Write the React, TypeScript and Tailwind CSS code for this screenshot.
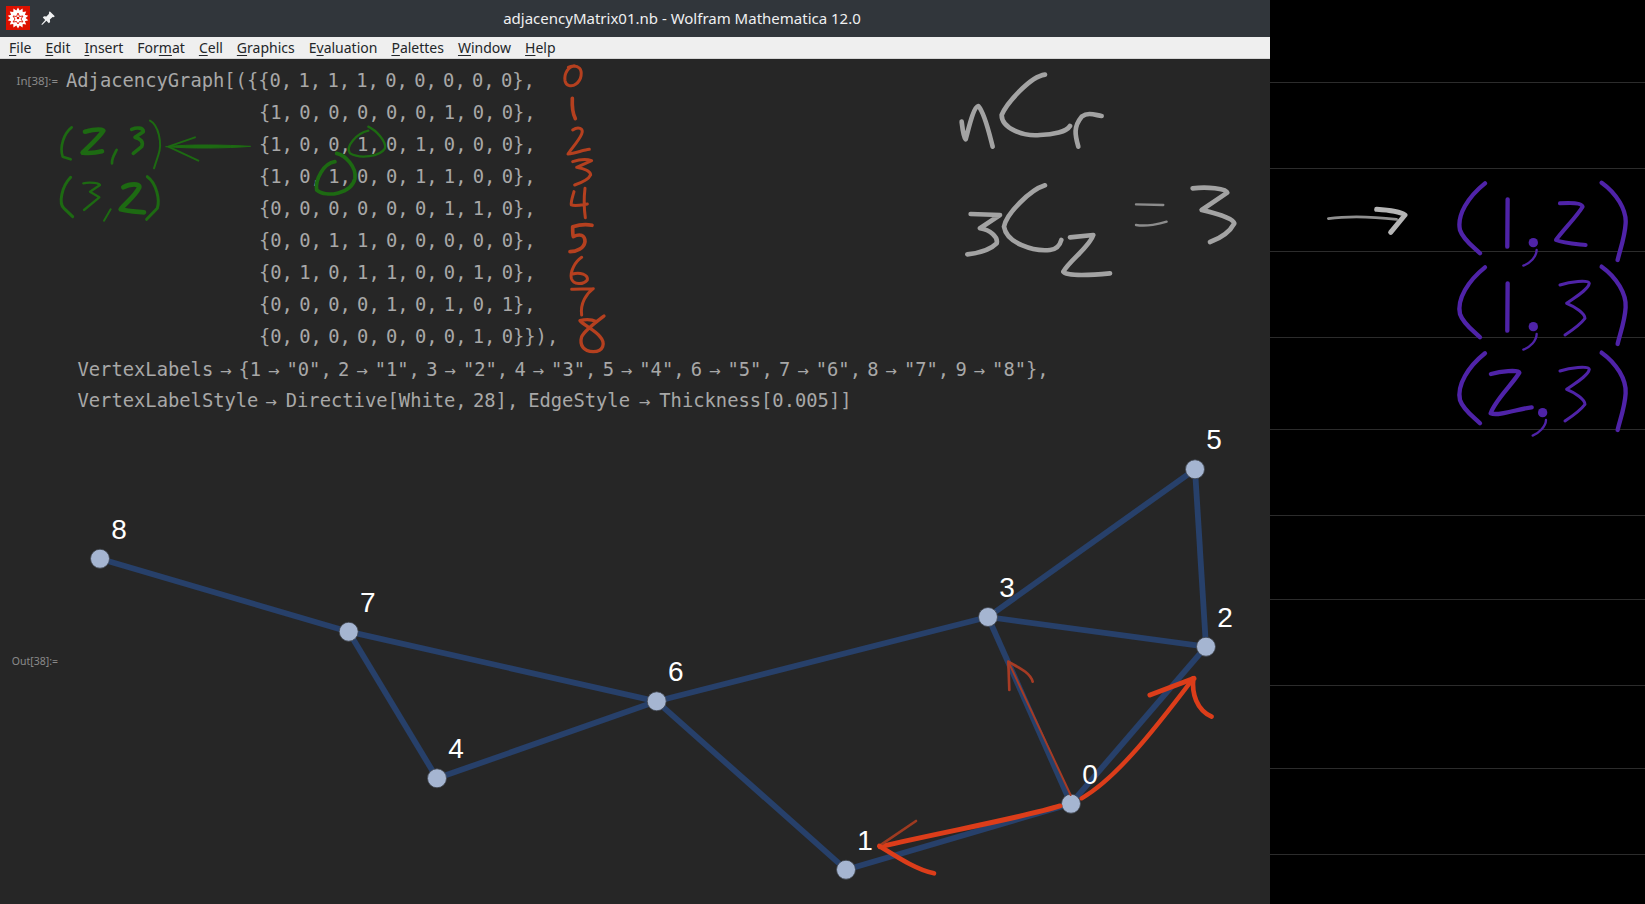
const MENU: [string, string, string][] = [
  ["", "F", "ile"],
  ["", "E", "dit"],
  ["", "I", "nsert"],
  ["For", "m", "at"],
  ["", "C", "ell"],
  ["", "G", "raphics"],
  ["E", "v", "aluation"],
  ["", "P", "alettes"],
  ["", "W", "indow"],
  ["", "H", "elp"],
];

const MATRIX = [
  "{1, 0, 0, 0, 0, 0, 1, 0, 0},",
  "{1, 0, 0, 1, 0, 1, 0, 0, 0},",
  "{1, 0, 1, 0, 0, 1, 1, 0, 0},",
  "{0, 0, 0, 0, 0, 0, 1, 1, 0},",
  "{0, 0, 1, 1, 0, 0, 0, 0, 0},",
  "{0, 1, 0, 1, 1, 0, 0, 1, 0},",
  "{0, 0, 0, 0, 1, 0, 1, 0, 1},",
  "{0, 0, 0, 0, 0, 0, 0, 1, 0}}),",
];

const NODES: Record<string, [number, number]> = {
  "0": [1071, 803.7],
  "1": [846, 869.7],
  "2": [1206, 646.7],
  "3": [988, 617],
  "4": [437, 778.3],
  "5": [1195, 469.3],
  "6": [656.7, 701.3],
  "7": [348.7, 631.7],
  "8": [100, 558.7],
};

const EDGES = ["01", "02", "03", "16", "23", "25", "35", "36", "46", "47", "67", "78"];

const RULES = [83, 86, 83, 86, 92, 86, 84, 86, 83, 86];

const LABELS = ["1", "2", "3", "4", "5", "6", "7", "8", "9"];

function Arrow() {
  return <span className="mx-[6.800px] font-['DejaVu_Sans',sans-serif] text-[14px]">→</span>;
}

function spikey() {
  const pts: string[] = [];
  for (let i = 0; i < 28; i++) {
    const r = i % 2 === 0 ? 10.5 : 7.6;
    const a = (i * Math.PI) / 14 - Math.PI / 2;
    pts.push(`${(12 + r * Math.cos(a)).toFixed(2)},${(12 + r * Math.sin(a)).toFixed(2)}`);
  }
  return pts.join(" ");
}

function Logo() {
  return (
    <svg width="24" height="24" viewBox="0 0 24 24" className="bg-[#dd1100]">
      <polygon points={spikey()} fill="#ffffff" />
      <path d="M12 7l1.5 3.5 3.5-.5-2 3 2 3-3.5-.5-1.500 2.500-1.500-2.500-3.500.5 2-3-2-3 3.500.5z" fill="none" stroke="#dd1100" strokeWidth="0.9" />
      <circle cx="12" cy="12" r="1.300" fill="#dd1100" />
    </svg>
  );
}

function PinIcon() {
  return (
    <svg width="16" height="16" viewBox="0 0 16 16" fill="#eff0f1">
      <path d="M9.700 1.200l5.100 5.100-1.300.9-.9-.3-2.700 2.700.2 2.400-1.200 1.200-2.500-2.500-4 4-1.200-.2 4-4.600-2.400-2.400 1.200-1.200 2.400.2 2.700-2.700-.3-.9z" />
    </svg>
  );
}

function Graph() {
  return (
    <svg viewBox="66 420 1204 484" width="1204" height="484">
      {EDGES.map((e) => {
        const a = NODES[e[0]];
        const b = NODES[e[1]];
        return <line key={e} x1={a[0]} y1={a[1]} x2={b[0]} y2={b[1]} stroke="#27406a" strokeWidth="5.800" />;
      })}
      {Object.entries(NODES).map(([k, p]) => (
        <g key={k}>
          <circle cx={p[0]} cy={p[1]} r="9.500" fill="#a5b5d1" stroke="#3f444d" strokeWidth="0.800" />
          <text x={p[0] + 19} y={p[1] - 20} textAnchor="middle" fontSize="28" fill="#ffffff" fontFamily="'Liberation Sans', sans-serif">
            {k}
          </text>
        </g>
      ))}
    </svg>
  );
}

function PurpleRow({ y, first, second, secondWidth }: { y: number; first: string; second: string; secondWidth: number }) {
  return (
    <g transform={`translate(0 ${y})`}>
      <path d="M675 100C625 140 590 195 600 240C610 270 640 290 660 310" />
      <path d={first} />
      <path d={second} strokeWidth={secondWidth} />
      <path d="M1025 98C1070 130 1100 180 1097 220C1095 260 1080 300 1073 330" />
    </g>
  );
}

function Ink() {
  return (
    <svg width="1645" height="904" viewBox="0 0 1645 904" fill="none" strokeLinecap="round" strokeLinejoin="round" className="pointer-events-none absolute inset-0">
      {/* red row numbers */}
      <g transform="translate(500 50) scale(0.3333)" stroke="#b5401f" strokeWidth="9">
        <path d="M225 48C205 48 192 70 195 92C198 108 215 112 228 102C245 90 248 65 238 54C230 46 215 46 205 52" />
        <path d="M217 145C216 165 218 190 226 206" strokeWidth="11" />
        <path d="M218 240C235 228 252 235 245 252C238 270 215 295 204 312C225 310 250 300 268 298" />
        <path d="M218 335C240 328 262 328 275 332L230 352C245 355 272 362 272 375C265 390 240 400 224 405" />
        <path d="M222 425C218 440 212 455 214 465C225 470 245 465 262 462M255 415C252 440 252 475 256 503" />
        <path d="M276 526C258 522 235 525 218 530C218 545 218 555 220 560C240 550 255 555 255 575C252 595 230 605 210 605" strokeWidth="11" />
        <path d="M245 622C225 635 210 665 214 685C220 705 250 705 262 690C265 675 240 665 218 672" />
        <path d="M215 718C235 716 260 718 280 716C260 730 240 760 245 795" />
        <path d="M312 798C290 815 255 840 245 860C238 885 250 905 280 905C310 905 318 880 300 860C285 840 250 825 240 812C255 808 275 808 290 815" strokeWidth="10" />
      </g>
      {/* green pairs and circles */}
      <g transform="translate(40 100) scale(0.3333)" stroke="#1d6a12" strokeWidth="8">
        <path d="M95 82C72 100 58 140 68 170L92 178" />
        <path d="M135 95C155 90 180 85 190 92C175 115 140 145 128 158C145 160 170 158 186 154" strokeWidth="14" />
        <path d="M230 150C222 165 215 175 216 190" />
        <path d="M275 88C290 82 310 82 310 95L285 112C300 115 312 125 305 140L280 160" strokeWidth="11" />
        <path d="M330 62C355 75 368 130 355 165L342 205" strokeWidth="6" />
        <path d="M92 232C65 260 55 310 72 325L98 350" strokeWidth="9" />
        <path d="M130 250C150 245 180 250 180 255L150 275L178 292L132 330" strokeWidth="7" />
        <path d="M212 328L192 362" strokeWidth="6" />
        <path d="M250 262C270 250 300 250 298 262C285 290 255 310 242 328C265 335 290 335 312 337" strokeWidth="14" />
        <path d="M322 230C350 250 360 300 352 325L320 358" strokeWidth="9" />
        <path d="M378 140C450 132 560 135 632 139C560 145 450 146 378 140Z" fill="#1d6a12" strokeWidth="3" />
        <path d="M465 112L385 140L475 182" strokeWidth="6" />
        <path d="M985 80C1010 92 1040 125 1035 145C1020 170 960 178 930 160C915 140 950 100 985 92" strokeWidth="7" />
        <path d="M890 160C915 165 950 200 945 235C935 280 860 295 830 270C825 240 850 190 885 185" strokeWidth="11" />
      </g>
      {/* grey combination formulas */}
      <g transform="translate(900 40) scale(0.3333)" stroke="#a3a3a3" strokeWidth="14">
        <path d="M185 245C188 270 190 290 197 298C205 270 220 200 235 198C255 220 270 290 278 320" />
        <path d="M435 104C390 110 320 190 305 225C305 265 370 290 420 285C460 285 500 275 510 258" />
        <path d="M535 320C525 285 520 260 545 230C565 215 585 225 605 228" />
        <path d="M212 522L300 525L240 565C270 570 295 590 290 610C270 630 230 640 202 643" />
        <path d="M435 436C390 450 320 520 312 560C320 610 400 635 450 630C470 628 480 615 484 600" />
        <path d="M510 592L580 585C570 620 510 660 490 695C500 710 580 705 630 700" />
        <path d="M708 493L790 495M708 555C740 560 780 552 800 545" strokeWidth="7" stroke="#8c8c8c" />
        <path d="M878 445C920 440 980 445 982 458L905 510C950 520 1000 535 1003 550C990 575 960 595 930 606" />
      </g>
      {/* right side panel */}
      <g transform="translate(1260 150) scale(0.3333)" stroke="#4f23a8" strokeWidth="13">
        <path d="M205 206C260 198 340 200 410 208" stroke="#8f8f8f" strokeWidth="8" />
        <path d="M350 178C380 180 420 185 435 195L392 247" stroke="#b5b5b5" strokeWidth="15" />
        <PurpleRow y={0} secondWidth={12} first="M743 148L742 290" second="M900 160C930 158 965 158 968 170C950 200 905 245 888 270C910 280 950 282 977 285" />
        <PurpleRow y={252} secondWidth={9} first="M743 148L742 290" second="M900 153C930 143 985 136 988 148C985 168 940 193 920 208C945 218 975 238 975 253C960 273 930 293 915 303" />
        <PurpleRow y={510} secondWidth={9} first="M693 162C720 155 775 148 778 158C760 190 705 240 692 280C715 290 780 265 815 262" second="M900 153C930 143 985 136 988 148C985 168 940 193 920 208C945 218 975 238 975 253C960 273 930 293 915 303" />
        <circle cx="820" cy="278" r="14" fill="#4f23a8" stroke="none" />
        <path d="M830 300C830 320 810 340 790 347" strokeWidth="7" />
        <circle cx="820" cy="530" r="14" fill="#4f23a8" stroke="none" />
        <path d="M830 552C830 572 810 592 790 599" strokeWidth="7" />
        <circle cx="848" cy="788" r="14" fill="#4f23a8" stroke="none" />
        <path d="M858 810C858 830 835 850 818 857" strokeWidth="7" />
      </g>
      {/* red arrows on the graph */}
      <g transform="translate(820 600) scale(0.3333)" stroke="#dc3d1a" strokeWidth="12">
        <path d="M720 618C620 650 400 690 180 740" strokeWidth="15" />
        <path d="M288 663L178 738" stroke="#9e3a20" strokeWidth="8" />
        <path d="M178 738C230 770 290 810 342 820" strokeWidth="14" />
        <path d="M785 595C880 540 980 420 1120 235" strokeWidth="13" />
        <path d="M990 285L1122 235" strokeWidth="15" />
        <path d="M1120 235C1115 280 1130 330 1175 350" strokeWidth="14" />
        <path d="M752 585L565 185" stroke="#a63b24" strokeWidth="6" />
        <path d="M568 270L565 185C590 200 630 215 638 245" stroke="#a63b24" strokeWidth="8" />
      </g>
    </svg>
  );
}

export default function App() {
  return (
    <div className="relative flex h-[904px] w-[1645px] overflow-hidden bg-black font-['Noto_Sans',sans-serif]">
      {/* Main window */}
      <div className="flex w-[1270px] flex-col bg-[#262626]">
        {/* Title bar */}
        <div className="relative flex h-[37px] items-center justify-center bg-[#31363b] pl-[94px] text-[15px] text-[#eff0f1]">
          <div className="absolute left-[6px] top-[6px] flex items-center gap-[10px]">
            <Logo />
            <PinIcon />
          </div>
          adjacencyMatrix01.nb - Wolfram Mathematica 12.0
        </div>

        {/* Menu */}
        <div className="flex h-[22px] items-center gap-[14px] border-b border-[#d5d5d5] bg-[#efefef] pl-[9px] text-[14px] text-[#232629]">
          {MENU.map(([a, u, b]) => (
            <span key={a + u + b}>
              {a}
              <span className="underline underline-offset-2">{u}</span>
              {b}
            </span>
          ))}
        </div>

        {/* Notebook */}
        <div className="flex flex-1 flex-col overflow-hidden">
          <div className="flex pt-[6px]">
            <div className="w-[58px] pt-[9px] text-right text-[11.500px] leading-[14px] text-[#8a8a8a]">In[38]:=</div>
            <div className="ml-[8px] flex-1 font-['DejaVu_Sans_Mono',monospace] text-[18.800px] leading-[32px] text-[#a8a8a8] [word-spacing:-5px]">
              <div className="whitespace-pre">
                AdjacencyGraph[({"{{"}0, 1, 1, 1, 0, 0, 0, 0, 0{"}"},
              </div>
              {MATRIX.map((row, i) => (
                <div key={i} className="pl-[193px] whitespace-pre">
                  {row}
                </div>
              ))}
              <div className="mt-[1px] pl-[11.500px] whitespace-pre">
                VertexLabels
                <Arrow />
                {"{"}
                {LABELS.map((n, i) => (
                  <span key={n}>
                    {n}
                    <Arrow />"{i}"{i < 8 ? ", " : ""}
                  </span>
                ))}
                {"},"}
              </div>
              <div className="-mt-[2px] pl-[11.500px] whitespace-pre">
                VertexLabelStyle
                <Arrow />
                <span className="ml-[2px]">Directive[White, 28],</span>
                <span className="ml-[10px]">EdgeStyle</span>
                <span className="ml-[2px]">
                  <Arrow />
                </span>
                <span className="ml-[2px]">Thickness[0.005]]</span>
              </div>
            </div>
          </div>

          <div className="mt-auto flex h-[484px] items-center">
            <div className="w-[58px] text-right text-[10.500px] text-[#8a8a8a]">Out[38]:=</div>
            <div className="ml-[8px]">
              <Graph />
            </div>
          </div>
        </div>
      </div>

      {/* Ruled side panel */}
      <div className="flex-1 bg-black">
        {RULES.map((h, i) => (
          <div key={i} style={{ height: h }} className="border-b border-[#2c2c2c]" />
        ))}
      </div>

      <Ink />
    </div>
  );
}
